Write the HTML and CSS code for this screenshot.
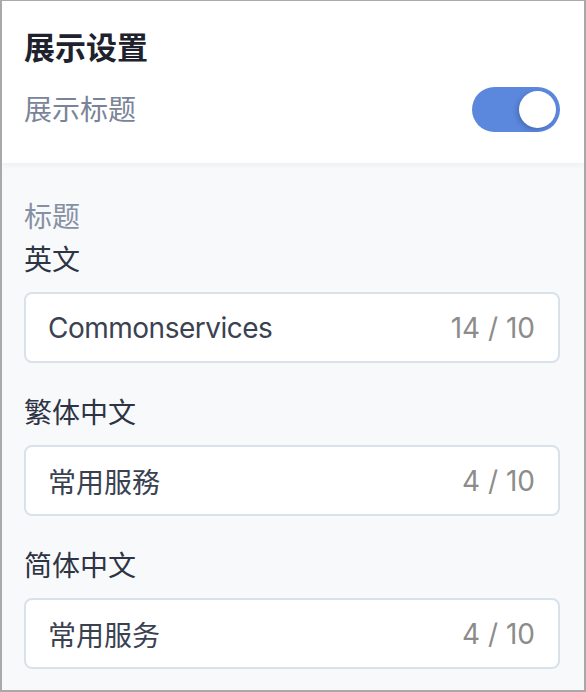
FILE: index.html
```html
<!DOCTYPE html>
<html>
    <head>
        <title>展示设置</title>
        <meta charset="utf-8"/>
        <meta name="viewport" content="width=device-width,initial-scale=1" />
        <link rel="stylesheet" href="styles.css">
    </head>
    <body>
        <main class="panel">
            <section class="panel-head">
                <h1>展示设置</h1>
                <div class="switch-row">
                    <span class="switch-label">展示标题</span>
                    <span class="switch is-on"><span class="knob"></span></span>
                </div>
            </section>

            <section class="panel-body">
                <div class="group-label">标题</div>

                <div class="field">
                    <div class="field-label">英文</div>
                    <div class="field-box">
                        <span class="value latin">Commonservices</span>
                        <span class="count">14 / 10</span>
                    </div>
                </div>

                <div class="field">
                    <div class="field-label">繁体中文</div>
                    <div class="field-box">
                        <span class="value">常用服務</span>
                        <span class="count">4 / 10</span>
                    </div>
                </div>

                <div class="field">
                    <div class="field-label">简体中文</div>
                    <div class="field-box">
                        <span class="value">常用服务</span>
                        <span class="count">4 / 10</span>
                    </div>
                </div>
            </section>
        </main>
    </body>
</html>
```

FILE: styles.css
```css
* {
    box-sizing: border-box;
}
html, body {
    margin: 0;
    padding: 0;
    background: #f8f9fb;
    font-family: 'Inter', 'Noto Sans CJK SC', sans-serif;
}

.panel {
    width: 586px;
    height: 692px;
    border: 2px solid #a9a9a9;
    border-top-width: 1px;
    background: #f8f9fb;
    overflow: hidden;
}

.panel-head {
    position: relative;
    z-index: 1;
    background: #fff;
    padding: 25px 24px 31px 22px;
    box-shadow: 0 2px 6px rgba(30, 40, 60, 0.05);
}
h1 {
    margin: 0;
    font-size: 31px;
    line-height: 44px;
    font-weight: 700;
    color: #1e222d;
}
.switch-row {
    display: flex;
    align-items: center;
    justify-content: space-between;
    margin-top: 17px;
}
.switch-label {
    font-size: 28px;
    line-height: 40px;
    color: #7a8498;
}
.switch {
    display: flex;
    align-items: center;
    width: 88px;
    height: 45px;
    padding: 0 4px;
    border-radius: 23px;
    background: #5b87dc;
}
.switch.is-on {
    justify-content: flex-end;
}
.knob {
    width: 37px;
    height: 37px;
    border-radius: 50%;
    background: #fff;
    box-shadow: -2px 2px 4px rgba(20, 40, 90, 0.25);
}

.panel-body {
    padding: 35px 24px 22px 22px;
}
.group-label {
    font-size: 28px;
    line-height: 38px;
    color: #8790a3;
}
.field {
    margin-top: 30px;
}
.group-label + .field {
    margin-top: 4px;
}
.field-label {
    font-size: 28px;
    line-height: 40px;
    color: #2d3444;
}
.field-box {
    display: flex;
    align-items: center;
    justify-content: space-between;
    height: 71px;
    margin-top: 12px;
    padding: 0 23px 0 22px;
    background: #fff;
    border: 2px solid #d9e1ea;
    border-radius: 8px;
    font-size: 28px;
}
.value {
    color: #3a4252;
}
.value.latin {
    letter-spacing: -0.5px;
}
.count {
    color: #8c8c8c;
}
```
